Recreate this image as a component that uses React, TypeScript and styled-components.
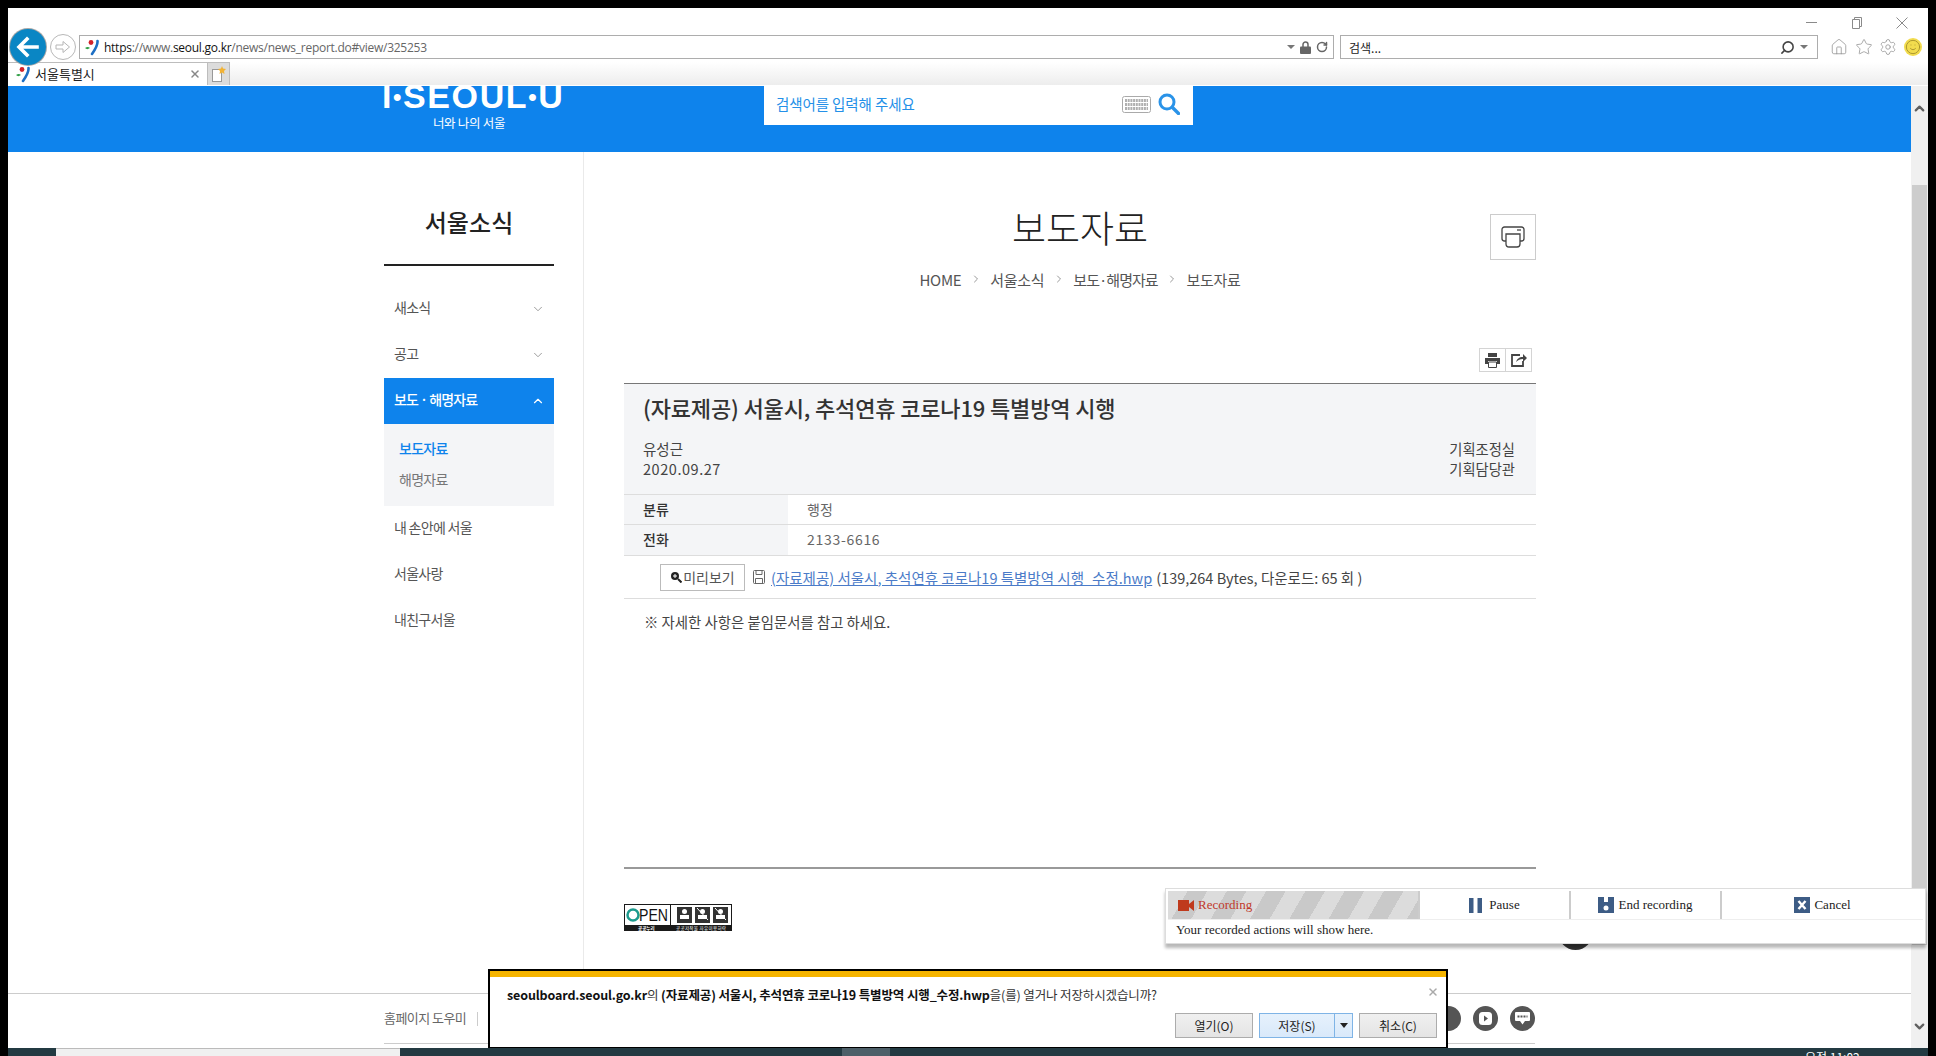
import React from "react";
import styled, { createGlobalStyle } from "styled-components";
import { ChevronDown, ChevronUp, ChevronRight, Home, Star, Settings, RotateCw, Search, Smile, X } from "lucide-react";

const kr = `"Noto Sans CJK KR", "Noto Sans", sans-serif`;

const GlobalStyle = createGlobalStyle`
  html, body {
    margin: 0;
    padding: 0;
    background: #000;
    overflow: hidden;
  }
  * { box-sizing: border-box; }
`;

const Screen = styled.div`
  position: relative;
  width: 1936px;
  height: 1056px;
  padding: 8px 8px 0;
  background: #000;
  display: flex;
  flex-direction: column;
  font-family: ${kr};
  overflow: hidden;
`;

/* browser chrome */
const Chrome = styled.div`
  height: 78px;
  flex-shrink: 0;
  background: #fff;
`;

const WindowControls = styled.div`
  height: 27px;
  padding-right: 4px;
  display: flex;
  justify-content: flex-end;
  align-items: center;
`;

const WindowButton = styled.div`
  width: 45px;
  height: 14px;
  margin-top: 3px;
  display: flex;
  justify-content: center;
  align-items: center;
  color: #8a8a8a;
`;

const NavRow = styled.div`
  height: 24px;
  padding-left: 2px;
  display: flex;
  align-items: center;
`;

const BackButton = styled.div`
  width: 36px;
  height: 36px;
  flex-shrink: 0;
  position: relative;
  z-index: 2;
  border-radius: 50%;
  background: #0a86c4;
  box-shadow: 0 0 0 1px #a8a8a8;
  display: flex;
  justify-content: center;
  align-items: center;
`;

const ForwardButton = styled.div`
  width: 26px;
  height: 26px;
  margin-left: 4px;
  flex-shrink: 0;
  border-radius: 50%;
  border: 1px solid #b8b8b8;
  display: flex;
  justify-content: center;
  align-items: center;
`;

const Field = styled.div<{ $width: number; $gap: number }>`
  width: ${(p) => p.$width}px;
  height: 24px;
  margin-left: ${(p) => p.$gap}px;
  flex-shrink: 0;
  border: 1px solid #adadad;
  background: #fff;
  display: flex;
  align-items: center;
  font-size: 12px;
  color: #222;
`;

const FieldFavicon = styled.span`
  margin-left: 4px;
  display: flex;
`;

const UrlText = styled.div`
  margin-left: 5px;
  flex: 1;
  font-family: "Open Sans", sans-serif;
  font-size: 12px;
  letter-spacing: -0.26px;
  color: #666;
  white-space: nowrap;
  b {
    font-weight: 400;
    color: #111;
  }
`;

const FieldIcons = styled.div<{ $end?: number }>`
  display: flex;
  align-items: center;
  gap: 5px;
  padding-right: ${(p) => p.$end ?? 5}px;
  color: #666;
`;

const DropArrow = styled.span`
  width: 0;
  height: 0;
  border-left: 4px solid transparent;
  border-right: 4px solid transparent;
  border-top: 4px solid #777;
`;

const SearchHint = styled.div`
  margin-left: 8px;
  flex: 1;
  color: #222;
`;

const MirroredSearch = styled(Search)`
  transform: scaleX(-1);
  color: #444;
`;

const ToolIcons = styled.div`
  margin-left: 9px;
  display: flex;
`;

const ToolIcon = styled.div`
  width: 24.5px;
  display: flex;
  justify-content: center;
  color: #8e8e8e;
`;

const SmileyFace = styled.div`
  width: 18px;
  height: 18px;
  border-radius: 50%;
  background: #f2dc4e;
  display: flex;
  justify-content: center;
  align-items: center;
  color: #a8932c;
`;

const TabRow = styled.div`
  height: 24px;
  margin-top: 3px;
  display: flex;
  background: linear-gradient(#ffffff, #ededed);
  border-bottom: 1px solid #fff;
`;

const Tab = styled.div`
  width: 200px;
  padding: 0 6px 0 7px;
  background: #fff;
  border-top: 1px solid #bdbdbd;
  border-right: 1px solid #bdbdbd;
  display: flex;
  align-items: center;
  font-size: 13px;
  color: #222;
`;

const TabTitle = styled.span`
  margin-left: 5px;
  padding-bottom: 2px;
  flex: 1;
`;

const NewTab = styled.div`
  width: 22px;
  background: #dcdcdc;
  border-top: 1px solid #bdbdbd;
  border-right: 1px solid #bdbdbd;
  display: flex;
  justify-content: center;
  align-items: center;
`;

/* viewport */
const Viewport = styled.div`
  flex: 1;
  min-height: 0;
  display: flex;
`;

const Page = styled.div`
  flex: 1;
  min-width: 0;
  background: #fff;
  display: flex;
  flex-direction: column;
  overflow: hidden;
`;

const Scrollbar = styled.div`
  width: 17px;
  flex-shrink: 0;
  background: #f0f0f0;
  padding-top: 15px;
  padding-bottom: 14px;
  display: flex;
  flex-direction: column;
  align-items: center;
  color: #606060;
`;

const Thumb = styled.div`
  width: 15px;
  height: 760px;
  margin-top: 69px;
  margin-bottom: auto;
  background: #cdcdcd;
`;

const Header = styled.header`
  height: 66px;
  flex-shrink: 0;
  padding-left: 376px;
  background: #0e83ec;
  display: flex;
  align-items: flex-start;
  overflow: hidden;
`;

const Logo = styled.div`
  width: 170px;
  color: #fff;
  text-align: center;
`;

const LogoMark = styled.div`
  height: 34px;
  margin: -7px 0 0 -2px;
  font-family: "Liberation Sans", sans-serif;
  font-size: 34px;
  line-height: 34px;
  font-weight: 700;
  letter-spacing: 1.6px;
  text-align: left;
  white-space: nowrap;
`;

const LogoDot = styled.span`
  font-size: 24px;
  position: relative;
  top: -3px;
`;

const LogoCaption = styled.div`
  margin-top: 1px;
  font-size: 12.5px;
  line-height: 18px;
  letter-spacing: -0.3px;
`;

const SiteSearch = styled.div`
  width: 429px;
  height: 39px;
  margin-left: 210px;
  padding: 0 13px 3px 12px;
  background: #fff;
  display: flex;
  align-items: center;
  font-size: 14.5px;
  letter-spacing: -0.1px;
  color: #2490e8;
`;

const SiteSearchHint = styled.div`
  flex: 1;
  padding-bottom: 2px;
`;

const KeyboardIcon = styled.svg`
  margin-right: 7px;
`;

const Body = styled.div`
  flex: 1;
  min-height: 0;
  padding-left: 376px;
  display: flex;
`;

const Sidebar = styled.aside`
  width: 200px;
  flex-shrink: 0;
  padding-right: 29px;
  border-right: 1px solid #eaeaea;
`;

const SideTitle = styled.h2`
  margin: 0;
  height: 114px;
  padding-top: 52px;
  border-bottom: 2px solid #222;
  font-size: 24px;
  line-height: 36px;
  font-weight: 500;
  letter-spacing: 0.1px;
  text-align: center;
  color: #222;
`;

const SideNav = styled.nav`
  margin-top: 20px;
`;

const SideItem = styled.div<{ $active?: boolean }>`
  height: 46px;
  padding: 0 9px 0 10px;
  display: flex;
  justify-content: space-between;
  align-items: center;
  font-size: 14px;
  letter-spacing: ${(p) => (p.$active ? "-0.95px" : "-0.7px")};
  font-weight: ${(p) => (p.$active ? 500 : 400)};
  background: ${(p) => (p.$active ? "#0e83ec" : "transparent")};
  color: ${(p) => (p.$active ? "#fff" : "#555")};
`;

const SideLabel = styled.span`
  padding-bottom: 4px;
`;

const SubMenu = styled.div`
  height: 82px;
  padding: 9px 15px 0;
  background: #f4f5f7;
`;

const SubItem = styled.div<{ $active?: boolean }>`
  height: 31px;
  line-height: 31px;
  font-size: 14px;
  letter-spacing: -0.7px;
  font-weight: ${(p) => (p.$active ? 500 : 400)};
  color: ${(p) => (p.$active ? "#0e83ec" : "#777")};
`;

const Content = styled.main`
  width: 952px;
  flex-shrink: 0;
  padding-left: 40px;
`;

const TitleBlock = styled.div`
  padding-top: 52px;
  display: grid;
  grid-template-columns: 46px 1fr 46px;
`;

const PageHeading = styled.h1`
  grid-column: 2;
  margin: 0;
  font-size: 37px;
  line-height: 46px;
  font-weight: 300;
  text-align: center;
  color: #222;
`;

const PrintBox = styled.div`
  grid-column: 3;
  width: 46px;
  height: 46px;
  margin-top: 10px;
  border: 1px solid #ccc;
  display: flex;
  justify-content: center;
  align-items: center;
`;

const Breadcrumb = styled.div`
  grid-column: 2;
  margin-top: 7px;
  height: 24px;
  display: flex;
  justify-content: center;
  align-items: center;
  font-size: 15px;
  letter-spacing: -0.3px;
  color: #555;
`;

const CrumbArrow = styled.span`
  width: 29px;
  display: flex;
  justify-content: center;
  color: #999;
`;

const TightCrumb = styled.span`
  letter-spacing: -1px;
`;

const ShareBar = styled.div`
  margin-top: 57px;
  padding-right: 4px;
  display: flex;
  justify-content: flex-end;
`;

const ShareButton = styled.div<{ $joined?: boolean }>`
  width: 27px;
  height: 24px;
  margin-left: ${(p) => (p.$joined ? "-1px" : "0")};
  border: 1px solid #d4d4d4;
  display: flex;
  justify-content: center;
  align-items: center;
`;

const ArticleHead = styled.div`
  margin-top: 11px;
  height: 112px;
  padding: 0 21px 0 19px;
  background: #f4f5f7;
  border-top: 1px solid #777;
  border-bottom: 1px solid #ddd;
`;

const ArticleTitle = styled.div`
  padding-top: 9px;
  height: 37px;
  font-size: 22px;
  line-height: 28px;
  font-weight: 500;
  letter-spacing: -0.15px;
  color: #333;
`;

const ArticleMeta = styled.div`
  margin-top: 18px;
  display: flex;
  justify-content: space-between;
  font-size: 14.5px;
  line-height: 20px;
  color: #444;
`;

const MetaDate = styled.span`
  letter-spacing: 0.55px;
`;

const MetaRight = styled.div`
  font-size: 14.3px;
  text-align: right;
`;

const InfoRow = styled.div<{ $height: number }>`
  height: ${(p) => p.$height}px;
  display: grid;
  grid-template-columns: 164px 1fr;
  border-bottom: 1px solid #ddd;
  font-size: 14px;
`;

const InfoLabel = styled.div`
  padding: 0 0 2px 19px;
  background: #f4f5f7;
  display: flex;
  align-items: center;
  font-weight: 500;
  color: #333;
`;

const InfoValue = styled.div<{ $digits?: boolean }>`
  padding: 0 0 2px 19px;
  display: flex;
  align-items: center;
  letter-spacing: ${(p) => (p.$digits ? "0.7px" : "0")};
  color: #666;
`;

const AttachRow = styled.div`
  height: 43px;
  padding-left: 36px;
  border-bottom: 1px solid #ddd;
  display: flex;
  align-items: center;
  font-size: 14.5px;
  color: #444;
  white-space: nowrap;
`;

const PreviewButton = styled.div`
  width: 85px;
  height: 27px;
  margin-right: 8px;
  border: 1px solid #bbb;
  display: flex;
  justify-content: center;
  align-items: center;
  gap: 1px;
  font-size: 14px;
  color: #555;
`;

const FileLink = styled.a`
  margin-left: 6px;
  margin-right: 4px;
  color: #4b7bc8;
  text-decoration: underline;
`;

const Note = styled.div`
  height: 270px;
  padding: 13px 0 0 20px;
  border-bottom: 2px solid #999;
  font-size: 14.4px;
  line-height: 20px;
  color: #444;
`;

const LicenseWrap = styled.div`
  margin-top: 35px;
  display: flex;
`;

const Footer = styled.footer`
  height: 55px;
  flex-shrink: 0;
  padding-left: 376px;
  border-top: 1px solid #ccc;
  overflow: hidden;
`;

const FooterRow = styled.div`
  width: 1151px;
  height: 50px;
  border-bottom: 1px solid #ccc;
  display: flex;
  align-items: center;
  font-size: 13px;
  letter-spacing: -0.55px;
  color: #666;
`;

const FooterText = styled.span`
  padding-bottom: 2px;
`;

const FooterDivider = styled.span`
  width: 1px;
  height: 14px;
  margin: 0 11px;
  background: #ccc;
`;

const FooterSocial = styled.div`
  margin-left: auto;
  display: flex;
  gap: 12px;
`;

const SocialDot = styled.div`
  width: 25px;
  height: 25px;
  border-radius: 50%;
  background: #555;
  display: flex;
  justify-content: center;
  align-items: center;
`;

const Taskbar = styled.div`
  height: 8px;
  flex-shrink: 0;
  background: #233a42;
  display: flex;
  overflow: hidden;
`;

const TaskSearch = styled.div`
  width: 344px;
  margin-left: 48px;
  background: #f0f0f0;
  border-top: 1px solid #bbb;
`;

const TaskActive = styled.div`
  width: 48px;
  margin-left: 442px;
  background: #4d5f68;
`;

const TaskClock = styled.div`
  margin-left: 915px;
  padding-top: 1px;
  font-size: 12px;
  line-height: 16px;
  white-space: nowrap;
  color: #fff;
`;

/* overlays */
const TopButton = styled.div`
  position: absolute;
  left: 1558px;
  top: 915px;
  width: 35px;
  height: 35px;
  border-radius: 50%;
  background: #333;
`;

const Recorder = styled.div`
  position: absolute;
  left: 1165px;
  top: 888px;
  width: 761px;
  height: 56px;
  padding: 2px;
  background: #fff;
  border: 1px solid #ddd;
  box-shadow: 0 4px 3px rgba(0, 0, 0, 0.28);
  font-family: "Liberation Serif", serif;
  font-size: 13px;
  color: #222;
`;

const RecorderBar = styled.div`
  height: 29px;
  display: grid;
  grid-template-columns: 250px 151px 151px 1fr;
  border-bottom: 1px solid #eee;
`;

const RecCell = styled.div<{ $striped?: boolean }>`
  display: flex;
  justify-content: ${(p) => (p.$striped ? "flex-start" : "center")};
  align-items: center;
  gap: 4px;
  padding-left: ${(p) => (p.$striped ? "10px" : "0")};
  border-left: ${(p) => (p.$striped ? "none" : "2px solid #ccc")};
  color: ${(p) => (p.$striped ? "#c0392b" : "#222")};
  background: ${(p) =>
    p.$striped
      ? "repeating-linear-gradient(120deg, #dcdcdc 0 17px, #c9c9c9 17px 34px)"
      : "#fff"};
`;

const PauseIcon = styled.svg`
  margin-right: 3px;
`;

const RecNote = styled.div`
  padding: 2px 0 0 8px;
`;

const Prompt = styled.div`
  position: absolute;
  left: 488px;
  top: 969px;
  width: 960px;
  height: 79px;
  background: #fff;
  border: 2px solid #000;
  border-bottom-width: 1px;
`;

const PromptBar = styled.div`
  height: 6px;
  background: #f5b400;
`;

const PromptText = styled.div`
  padding: 8px 0 0 17px;
  height: 36px;
  font-size: 12.5px;
  line-height: 20px;
  letter-spacing: -0.13px;
  color: #333;
  white-space: nowrap;
  b {
    font-weight: 700;
    color: #111;
  }
`;

const PromptClose = styled.div`
  position: absolute;
  right: 7px;
  top: 8px;
  color: #aaa;
`;

const PromptButtons = styled.div`
  padding-right: 9px;
  display: flex;
  justify-content: flex-end;
  gap: 6px;
`;

const PromptButton = styled.div<{ $primary?: boolean }>`
  width: ${(p) => (p.$primary ? "94px" : "78px")};
  height: 25px;
  border: 1px solid ${(p) => (p.$primary ? "#7fb4e6" : "#acacac")};
  background: ${(p) =>
    p.$primary ? "linear-gradient(#e6f1fc, #d9e9fa)" : "linear-gradient(#f0f0f0, #e4e4e4)"};
  display: flex;
  align-items: stretch;
  font-size: 12px;
  color: #222;
`;

const PromptLabel = styled.div`
  flex: 1;
  display: flex;
  justify-content: center;
  align-items: center;
`;

const PromptCaret = styled.div`
  width: 18px;
  border-left: 1px solid #7fb4e6;
  display: flex;
  justify-content: center;
  align-items: center;
  &::after {
    content: "";
    border-left: 4px solid transparent;
    border-right: 4px solid transparent;
    border-top: 5px solid #222;
  }
`;

const SeoulMark = () => (
  <svg width="15" height="17" viewBox="0 0 15 17">
    <circle cx="7" cy="3.5" r="2.4" fill="#d2232a" />
    <path d="M1 9c2-1.5 3.5-1.500 5 0-2 1.500-3.500 1.500-5 0z" fill="#2f9e44" />
    <path d="M13.500 2c.5 4-2 8-5.500 13" fill="none" stroke="#1d6fc4" strokeWidth="2.600" strokeLinecap="round" />
  </svg>
);

const LicenseBadge = () => (
  <svg width="108" height="27" viewBox="0 0 108 27">
    <rect width="108" height="27" fill="#1a1a1a" />
    <rect x="1" y="1" width="45" height="20" fill="#fff" />
    <rect x="47" y="1" width="60" height="20" fill="#fff" />
    <circle cx="9" cy="11" r="5.500" fill="none" stroke="#1d9b8e" strokeWidth="2.500" />
    <text x="15" y="17" fontFamily="Liberation Sans" fontSize="16" fill="#111" textLength="29" lengthAdjust="spacingAndGlyphs">PEN</text>
    {[53, 71, 89].map((x, i) => (
      <g key={x}>
        <rect x={x} y="3" width="15" height="16" fill="#333" />
        <circle cx={x + 7.5} cy="7.500" r="2.500" fill="#fff" />
        <rect x={x + 3} y="11" width="9" height="4" fill="#fff" />
        {i > 0 && <path d={`M${x + 2} 4l11 12`} stroke="#fff" strokeWidth="1" />}
      </g>
    ))}
    <text x="14" y="25.500" fontFamily="Noto Sans CJK KR" fontSize="4.500" fontWeight="700" fill="#fff">공공누리</text>
    <text x="52" y="25.500" fontFamily="Noto Sans CJK KR" fontSize="4.500" fill="#fff" textLength="50">공공저작물 자유이용허락</text>
  </svg>
);

const FloppyIcon = ({ color = "#666", size = 12 }: { color?: string; size?: number }) => (
  <svg width={size} height={size + 2} viewBox="0 0 12 14" fill="none" stroke={color} strokeWidth="1">
    <rect x=".5" y=".5" width="11" height="13" rx="1" />
    <path d="M3 .5v4h6v-4M2.500 13.500v-5h7v5" />
  </svg>
);

const KeyRow = ({ y }: { y: number }) => (
  <path d={`M3 ${y}h23`} stroke="#b0b0b0" strokeWidth="3" strokeDasharray="2 .7" />
);

export default function App() {
  return (
    <Screen>
      <GlobalStyle />
      <Chrome>
        <WindowControls>
          <WindowButton>
            <svg width="11" height="2"><rect width="11" height="1" fill="#8a8a8a" /></svg>
          </WindowButton>
          <WindowButton>
            <svg width="10" height="12" viewBox="0 0 10 12" fill="none" stroke="#8a8a8a">
              <path d="M.5 2.500h7v9h-7zM2.500 2.500v-2h7v9h-2" />
            </svg>
          </WindowButton>
          <WindowButton>
            <svg width="12" height="12" viewBox="0 0 12 12" stroke="#8a8a8a">
              <path d="M.5.5l11 11M11.500.5l-11 11" />
            </svg>
          </WindowButton>
        </WindowControls>
        <NavRow>
          <BackButton>
            <svg width="24" height="22" viewBox="0 0 24 22" fill="none" stroke="#fff" strokeWidth="3.600" strokeLinecap="square">
              <path d="M11 3l-8 8 8 8M4 11h17" />
            </svg>
          </BackButton>
          <ForwardButton>
            <svg width="16" height="14" viewBox="0 0 16 14" fill="none" stroke="#b5b5b5">
              <path d="M1 5h7V1.500L14.500 7 8 12.500V9H1z" />
            </svg>
          </ForwardButton>
          <Field $width={1255} $gap={3}>
            <FieldFavicon><SeoulMark /></FieldFavicon>
            <UrlText>
              <b>https</b>://www.<b>seoul.go.kr</b>/news/news_report.do#view/325253
            </UrlText>
            <FieldIcons>
              <DropArrow />
              <svg width="11" height="13" viewBox="0 0 11 13" fill="none">
                <path d="M3 6V3.500a2.500 2.500 0 0 1 5 0V6" stroke="#666" strokeWidth="1.500" />
                <rect y="5.500" width="11" height="7.500" rx="1" fill="#666" />
              </svg>
              <RotateCw size={12} strokeWidth={3} />
            </FieldIcons>
          </Field>
          <Field $width={478} $gap={6}>
            <SearchHint>검색...</SearchHint>
            <FieldIcons $end={9}>
              <MirroredSearch size={15} strokeWidth={2.5} />
              <DropArrow />
            </FieldIcons>
          </Field>
          <ToolIcons>
            <ToolIcon><Home size={18} strokeWidth={1} /></ToolIcon>
            <ToolIcon><Star size={18} strokeWidth={1} /></ToolIcon>
            <ToolIcon><Settings size={18} strokeWidth={1} /></ToolIcon>
            <ToolIcon>
              <SmileyFace><Smile size={16} strokeWidth={1.4} /></SmileyFace>
            </ToolIcon>
          </ToolIcons>
        </NavRow>
        <TabRow>
          <Tab>
            <SeoulMark />
            <TabTitle>서울특별시</TabTitle>
            <X size={12} color="#888" strokeWidth={3} />
          </Tab>
          <NewTab>
            <svg width="14" height="17" viewBox="0 0 14 17">
              <rect x=".5" y="3.500" width="9" height="12" fill="#fff" stroke="#999" />
              <path d="M10 0l1 2.500 3 .5-2 2 .5 3L10 6.500 7.500 8 8 5 6 3l3-.5z" fill="#f2b233" />
            </svg>
          </NewTab>
        </TabRow>
      </Chrome>

      <Viewport>
        <Page>
          <Header>
            <Logo>
              <LogoMark>I<LogoDot>•</LogoDot>SEOUL<LogoDot>•</LogoDot>U</LogoMark>
              <LogoCaption>너와 나의 서울</LogoCaption>
            </Logo>
            <SiteSearch>
              <SiteSearchHint>검색어를 입력해 주세요</SiteSearchHint>
              <KeyboardIcon width="29" height="17" viewBox="0 0 29 17">
                <rect x=".5" y=".5" width="28" height="16" rx="2" fill="#fff" stroke="#aaa" />
                <KeyRow y={4.5} />
                <KeyRow y={8.5} />
                <KeyRow y={12.5} />
              </KeyboardIcon>
              <svg width="22" height="22" viewBox="0 0 22 22" fill="none" stroke="#2a93e8">
                <circle cx="9" cy="9" r="7" strokeWidth="3" />
                <path d="M14.500 14.500L20.500 20.500" strokeWidth="3.400" strokeLinecap="round" />
              </svg>
            </SiteSearch>
          </Header>

          <Body>
            <Sidebar>
              <SideTitle>서울소식</SideTitle>
              <SideNav>
                <SideItem><SideLabel>새소식</SideLabel><ChevronDown size={14} color="#888" strokeWidth={1.4} /></SideItem>
                <SideItem><SideLabel>공고</SideLabel><ChevronDown size={14} color="#888" strokeWidth={1.4} /></SideItem>
                <SideItem $active><SideLabel>보도 · 해명자료</SideLabel><ChevronUp size={14} color="#fff" strokeWidth={2} /></SideItem>
                <SubMenu>
                  <SubItem $active>보도자료</SubItem>
                  <SubItem>해명자료</SubItem>
                </SubMenu>
                <SideItem><SideLabel>내 손안에 서울</SideLabel></SideItem>
                <SideItem><SideLabel>서울사랑</SideLabel></SideItem>
                <SideItem><SideLabel>내친구서울</SideLabel></SideItem>
              </SideNav>
            </Sidebar>

            <Content>
              <TitleBlock>
                <PageHeading>보도자료</PageHeading>
                <PrintBox>
                  <svg width="24" height="22" viewBox="0 0 24 22" fill="none" stroke="#444" strokeWidth="1.300">
                    <path d="M5 15H3.500A2.500 2.500 0 0 1 1 12.500V3.500A2.500 2.500 0 0 1 3.500 1h17A2.500 2.500 0 0 1 23 3.500v9a2.500 2.500 0 0 1-2.500 2.500H19" />
                    <path d="M5 8h14v10a3 3 0 0 1-3 3H8a3 3 0 0 1-3-3z" />
                    <path d="M16 4h4" />
                  </svg>
                </PrintBox>
                <Breadcrumb>
                  HOME
                  <CrumbArrow><ChevronRight size={12} /></CrumbArrow>
                  서울소식
                  <CrumbArrow><ChevronRight size={12} /></CrumbArrow>
                  <TightCrumb>보도·해명자료</TightCrumb>
                  <CrumbArrow><ChevronRight size={12} /></CrumbArrow>
                  보도자료
                </Breadcrumb>
              </TitleBlock>

              <ShareBar>
                <ShareButton>
                  <svg width="15" height="15" viewBox="0 0 15 15">
                    <rect x="3" y="0" width="9" height="4" fill="#444" />
                    <path d="M0 5h15v6h-3V8H3v3H0z" fill="#444" />
                    <path d="M3.500 9h8v5.500h-8z" fill="#fff" stroke="#444" />
                  </svg>
                </ShareButton>
                <ShareButton $joined>
                  <svg width="16" height="14" viewBox="0 0 16 14" fill="none">
                    <path d="M9 2H1v11h11V8" stroke="#444" strokeWidth="1.800" />
                    <path d="M5 9c1-3 3-5 7-5V1l4 4-4 4V6c-3 0-5 1-7 3z" fill="#444" />
                  </svg>
                </ShareButton>
              </ShareBar>

              <ArticleHead>
                <ArticleTitle>(자료제공) 서울시, 추석연휴 코로나19 특별방역 시행</ArticleTitle>
                <ArticleMeta>
                  <div>유성근<br /><MetaDate>2020.09.27</MetaDate></div>
                  <MetaRight>기획조정실<br />기획담당관</MetaRight>
                </ArticleMeta>
              </ArticleHead>
              <InfoRow $height={30}>
                <InfoLabel>분류</InfoLabel>
                <InfoValue>행정</InfoValue>
              </InfoRow>
              <InfoRow $height={31}>
                <InfoLabel>전화</InfoLabel>
                <InfoValue $digits>2133-6616</InfoValue>
              </InfoRow>
              <AttachRow>
                <PreviewButton>
                  <svg width="12" height="12" viewBox="0 0 12 12">
                    <circle cx="5" cy="5" r="4" fill="#222" />
                    <path d="M8 8l3.500 3.500" stroke="#222" strokeWidth="2" />
                    <path d="M3 5h4M5 3v4" stroke="#fff" />
                  </svg>
                  미리보기
                </PreviewButton>
                <FloppyIcon />
                <FileLink href="#">(자료제공) 서울시, 추석연휴 코로나19 특별방역 시행_수정.hwp</FileLink>
                (139,264 Bytes, 다운로드: 65 회 )
              </AttachRow>
              <Note>※ 자세한 사항은 붙임문서를 참고 하세요.</Note>
              <LicenseWrap><LicenseBadge /></LicenseWrap>
            </Content>
          </Body>

          <Footer>
            <FooterRow>
              <FooterText>홈페이지 도우미</FooterText>
              <FooterDivider />
              <FooterText>저작권 정책</FooterText>
              <FooterSocial>
                <SocialDot />
                <SocialDot>
                  <svg width="13" height="13" viewBox="0 0 13 13">
                    <rect width="13" height="13" rx="3.500" fill="#fff" />
                    <path d="M5 3.500l4 3-4 3z" fill="#555" />
                  </svg>
                </SocialDot>
                <SocialDot>
                  <svg width="17" height="15" viewBox="0 0 17 15">
                    <path d="M2 1h13a1 1 0 0 1 1 1v7a1 1 0 0 1-1 1h-4l-2.500 3.500L6 10H2a1 1 0 0 1-1-1V2a1 1 0 0 1 1-1z" fill="#fff" />
                    <path d="M3.500 5.500h10" stroke="#555" strokeWidth="2" strokeDasharray="2 1" />
                  </svg>
                </SocialDot>
              </FooterSocial>
            </FooterRow>
          </Footer>
        </Page>
        <Scrollbar>
          <ChevronUp size={15} strokeWidth={3.6} />
          <Thumb />
          <ChevronDown size={15} strokeWidth={3.6} />
        </Scrollbar>
      </Viewport>

      <Taskbar>
        <TaskSearch />
        <TaskActive />
        <TaskClock>오전 11:02</TaskClock>
      </Taskbar>

      <TopButton />

      <Recorder>
        <RecorderBar>
          <RecCell $striped>
            <svg width="16" height="11" viewBox="0 0 16 11">
              <rect width="11" height="11" fill="#bf3a1c" />
              <path d="M11 4l5-4v11l-5-4z" fill="#bf3a1c" />
            </svg>
            Recording
          </RecCell>
          <RecCell>
            <PauseIcon width="13" height="15" viewBox="0 0 13 15">
              <rect width="4.500" height="15" fill="#3d5c85" />
              <rect x="8.500" width="4.500" height="15" fill="#3d5c85" />
            </PauseIcon>
            Pause
          </RecCell>
          <RecCell>
            <svg width="16" height="16" viewBox="0 0 16 16">
              <path d="M0 0h16v16H0z" fill="#3d5c85" />
              <rect x="6" y="0" width="4" height="5" fill="#fff" />
              <circle cx="8" cy="11" r="2.500" fill="#fff" />
            </svg>
            End recording
          </RecCell>
          <RecCell>
            <svg width="16" height="16" viewBox="0 0 16 16">
              <rect width="16" height="16" fill="#3d5c85" />
              <path d="M4.500 4l7 8M11.500 4l-7 8" stroke="#fff" strokeWidth="2.400" />
            </svg>
            Cancel
          </RecCell>
        </RecorderBar>
        <RecNote>Your recorded actions will show here.</RecNote>
      </Recorder>

      <Prompt>
        <PromptBar />
        <PromptClose><X size={12} strokeWidth={3} /></PromptClose>
        <PromptText>
          <b>seoulboard.seoul.go.kr</b>의 <b>(자료제공) 서울시, 추석연휴 코로나19 특별방역 시행_수정.hwp</b>을(를) 열거나 저장하시겠습니까?
        </PromptText>
        <PromptButtons>
          <PromptButton><PromptLabel>열기(O)</PromptLabel></PromptButton>
          <PromptButton $primary>
            <PromptLabel>저장(S)</PromptLabel>
            <PromptCaret />
          </PromptButton>
          <PromptButton><PromptLabel>취소(C)</PromptLabel></PromptButton>
        </PromptButtons>
      </Prompt>
    </Screen>
  );
}
